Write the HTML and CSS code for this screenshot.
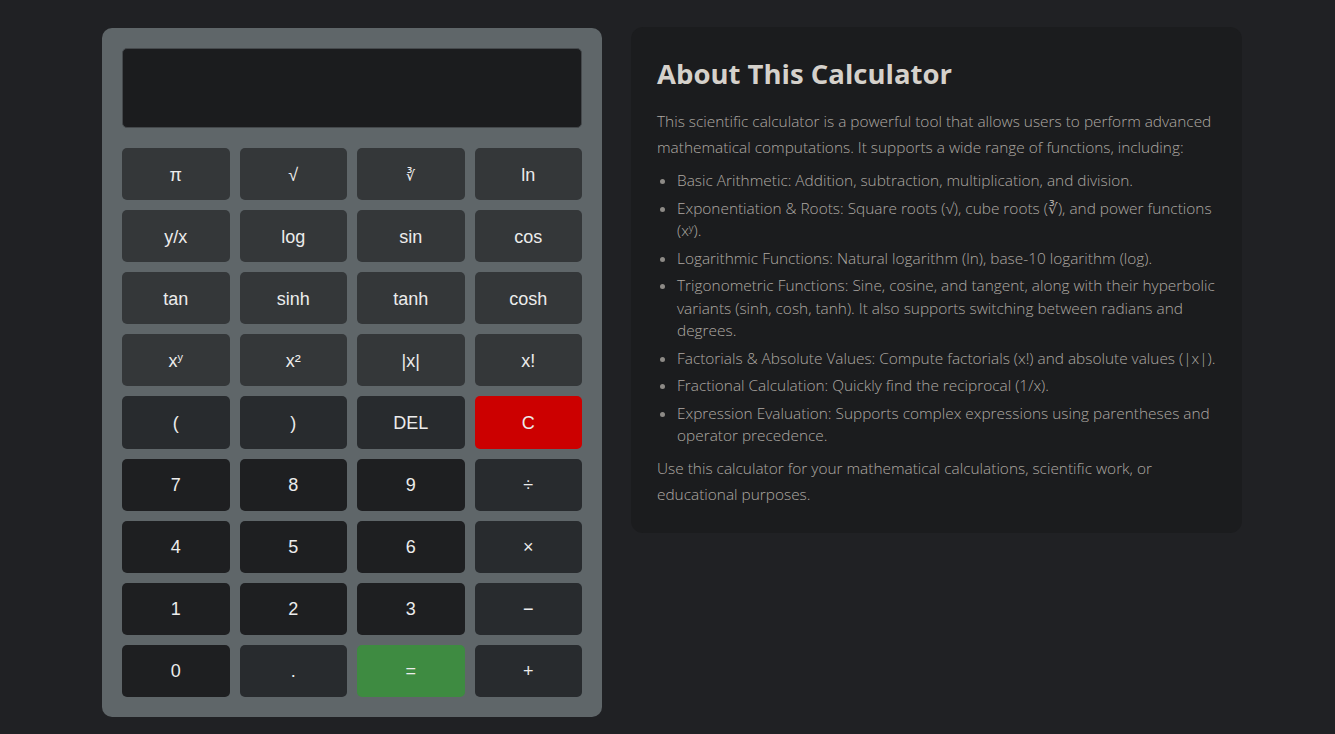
FILE: index.html
```html
<!DOCTYPE html>
<html lang="en">
<head>
<meta charset="utf-8">
<title>Scientific Calculator</title>
<link rel="stylesheet" href="styles.css">
</head>
<body>
<main class="page">
  <section class="calculator">
    <div class="display"></div>
    <div class="keys">
      <button class="key fn">π</button>
      <button class="key fn">√</button>
      <button class="key fn small">∛</button>
      <button class="key fn">ln</button>
      <button class="key fn">y/x</button>
      <button class="key fn">log</button>
      <button class="key fn">sin</button>
      <button class="key fn">cos</button>
      <button class="key fn">tan</button>
      <button class="key fn">sinh</button>
      <button class="key fn">tanh</button>
      <button class="key fn">cosh</button>
      <button class="key fn">x<sup>y</sup></button>
      <button class="key fn">x²</button>
      <button class="key fn">|x|</button>
      <button class="key fn">x!</button>
      <button class="key op">(</button>
      <button class="key op">)</button>
      <button class="key op">DEL</button>
      <button class="key clear">C</button>
      <button class="key num">7</button>
      <button class="key num">8</button>
      <button class="key num">9</button>
      <button class="key op">÷</button>
      <button class="key num">4</button>
      <button class="key num">5</button>
      <button class="key num">6</button>
      <button class="key op">×</button>
      <button class="key num">1</button>
      <button class="key num">2</button>
      <button class="key num">3</button>
      <button class="key op">−</button>
      <button class="key num">0</button>
      <button class="key op">.</button>
      <button class="key equals">=</button>
      <button class="key op">+</button>
    </div>
  </section>
  <section class="about">
    <h1>About This Calculator</h1>
    <p>This scientific calculator is a powerful tool that allows users to perform advanced mathematical computations. It supports a wide range of functions, including:</p>
    <ul>
      <li>Basic Arithmetic: Addition, subtraction, multiplication, and division.</li>
      <li>Exponentiation &amp; Roots: Square roots (√), cube roots (∛), and power functions (xʸ).</li>
      <li>Logarithmic Functions: Natural logarithm (ln), base-10 logarithm (log).</li>
      <li>Trigonometric Functions: Sine, cosine, and tangent, along with their hyperbolic variants (sinh, cosh, tanh). It also supports switching between radians and degrees.</li>
      <li>Factorials &amp; Absolute Values: Compute factorials (x!) and absolute values (|x|).</li>
      <li>Fractional Calculation: Quickly find the reciprocal (1/x).</li>
      <li>Expression Evaluation: Supports complex expressions using parentheses and operator precedence.</li>
    </ul>
    <p>Use this calculator for your mathematical calculations, scientific work, or educational purposes.</p>
  </section>
</main>
</body>
</html>
```

FILE: styles.css
```css
* { box-sizing: border-box; }

html, body {
  margin: 0;
  padding: 0;
  background: #202124;
}

body {
  font-family: "Open Sans", "Noto Sans", sans-serif;
}

.page {
  display: flex;
  align-items: flex-start;
  gap: 29px;
  width: 1140px;
  margin: 0 0 0 102px;
  padding-top: 27px;
}

.calculator {
  flex: 0 0 500px;
  margin-top: 1px;
  padding: 20px;
  background: #5f6669;
  border-radius: 10px;
  display: flex;
  flex-direction: column;
  gap: 20px;
}

.display {
  height: 80px;
  background: #1b1c1e;
  border: 1px solid #45494c;
  border-radius: 5px;
}

.keys {
  display: grid;
  grid-template-columns: repeat(4, 1fr);
  grid-auto-rows: 52.12px;
  gap: 10px;
}

.key {
  border: none;
  border-radius: 5px;
  color: #ececec;
  font-family: "Liberation Sans", Arial, sans-serif;
  font-size: 18px;
  padding: 2px 0 0;
  cursor: pointer;
}

.key sup {
  font-size: 11px;
  vertical-align: 6px;
  line-height: 0;
}

.key.small { font-size: 14px; }

.fn { background: #343739; }
.op { background: #282b2e; }
.num { background: #1e1f21; }
.clear { background: #cc0000; }
.equals { background: #3e8b41; }

.about {
  flex: 1;
  background: #1b1c1e;
  border-radius: 12px;
  padding: 28px 26px 25px;
  color: #aea9a3;
  font-size: 15.4px;
  font-weight: 300;
}

.about h1 {
  margin: 0 0 16px;
  font-size: 27.5px;
  font-weight: 700;
  color: #d5d1cb;
  line-height: 38px;
}

.about p {
  margin: 0 0 9px;
  line-height: 26px;
}

.about p:last-child { margin-bottom: 0; }

.about ul {
  margin: 0 0 8px;
  padding-left: 20px;
}

.about li {
  line-height: 22.5px;
  margin-bottom: 5px;
}

.about li::marker { color: #8d8a86; }
```
